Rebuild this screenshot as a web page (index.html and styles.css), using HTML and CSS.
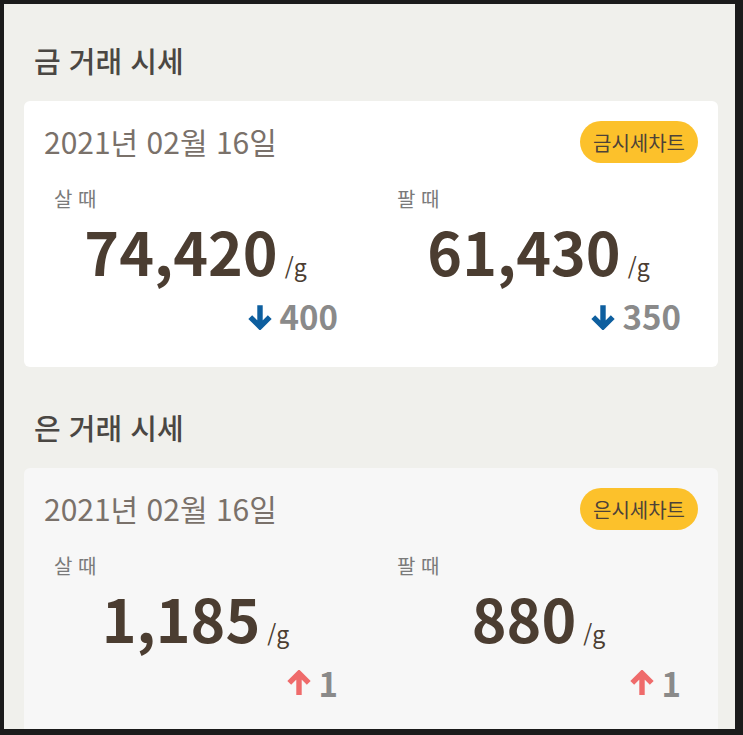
FILE: index.html
```html
<!DOCTYPE html>
<html lang="ko">

<head>
    <meta charset="UTF-8">
    <meta name="viewport" content="width=device-width, initial-scale=1.0">
    <title>금/은 거래 시세</title>
    <link rel="stylesheet" href="styles.css">
</head>

<body>
    <div class="screen">
        <h2 class="section-title">금 거래 시세</h2>
        <div class="price-card">
            <div class="card-head">
                <div class="date">2021년 02월 16일</div>
                <button class="chart-button">금시세차트</button>
            </div>
            <div class="price-grid">
                <div class="price-col">
                    <div class="price-label">살 때</div>
                    <div class="price-value">74,420<span class="unit">/g</span></div>
                    <div class="price-change">
                        <svg class="arrow down" viewBox="0 0 24 24"><path d="M12 1.5V21M3 12.5L12 21.5L21 12.5" /></svg>
                        <span>400</span>
                    </div>
                </div>
                <div class="price-col">
                    <div class="price-label">팔 때</div>
                    <div class="price-value">61,430<span class="unit">/g</span></div>
                    <div class="price-change">
                        <svg class="arrow down" viewBox="0 0 24 24"><path d="M12 1.5V21M3 12.5L12 21.5L21 12.5" /></svg>
                        <span>350</span>
                    </div>
                </div>
            </div>
        </div>

        <h2 class="section-title">은 거래 시세</h2>
        <div class="price-card silver">
            <div class="card-head">
                <div class="date">2021년 02월 16일</div>
                <button class="chart-button">은시세차트</button>
            </div>
            <div class="price-grid">
                <div class="price-col">
                    <div class="price-label">살 때</div>
                    <div class="price-value">1,185<span class="unit">/g</span></div>
                    <div class="price-change">
                        <svg class="arrow up" viewBox="0 0 24 24"><path d="M12 22.5V3M3 11.5L12 2.5L21 11.5" /></svg>
                        <span>1</span>
                    </div>
                </div>
                <div class="price-col">
                    <div class="price-label">팔 때</div>
                    <div class="price-value">880<span class="unit">/g</span></div>
                    <div class="price-change">
                        <svg class="arrow up" viewBox="0 0 24 24"><path d="M12 22.5V3M3 11.5L12 2.5L21 11.5" /></svg>
                        <span>1</span>
                    </div>
                </div>
            </div>
        </div>
    </div>
</body>

</html>
```

FILE: styles.css
```css
body {
    font-family: "Noto Sans CJK KR", "Noto Sans", sans-serif;
    margin: 0;
    padding: 0;
    background-color: #1b1b1b;
}

.screen {
    margin: 4px 8px 0 4px;
    height: 725px;
    padding: 0 17px 0 20px;
    background-color: #f0f0ec;
    overflow: hidden;
}

.section-title {
    margin: 0;
    padding: 37px 0 0 10px;
    font-size: 29px;
    line-height: 38px;
    font-weight: 500;
    color: #4a4743;
}

.section-title + .price-card {
    margin-top: 22px;
}

.price-card + .section-title {
    padding-top: 41px;
}

.price-card {
    background-color: #fff;
    border-radius: 6px;
    padding: 20px 20px 33px;
}

.price-card.silver {
    background-color: #f7f7f7;
}

.card-head {
    display: flex;
    justify-content: space-between;
    align-items: center;
}

.date {
    font-size: 30px;
    line-height: 40px;
    color: #7a716a;
    margin-top: -3px;
}

.chart-button {
    font-family: inherit;
    font-size: 20px;
    height: 42px;
    padding: 0 13px;
    border: none;
    border-radius: 21px;
    background-color: #fcc12b;
    color: #4d4238;
}

.price-grid {
    display: grid;
    grid-template-columns: 1fr 1fr;
    column-gap: 32px;
    margin-top: 22px;
}

.price-label {
    padding-left: 10px;
    font-size: 20px;
    line-height: 28px;
    color: #7a7a7a;
}

.price-value {
    text-align: center;
    padding-right: 8px;
    font-size: 59px;
    font-weight: 700;
    line-height: 70px;
    color: #4b3d31;
    margin-top: 3px;
}

.unit {
    margin-left: 7px;
    font-size: 23px;
    font-weight: 400;
}

.price-change {
    display: flex;
    justify-content: flex-end;
    align-items: center;
    gap: 7px;
    margin-top: -3px;
    padding-right: 17px;
    font-size: 33px;
    line-height: 36px;
    font-weight: 700;
    color: #8a8a8a;
}

.arrow {
    width: 26px;
    height: 27px;
    fill: none;
    stroke-width: 5;
}

.arrow.down {
    stroke: #0e5f9f;
}

.arrow.up {
    stroke: #ef6b6b;
}
```
